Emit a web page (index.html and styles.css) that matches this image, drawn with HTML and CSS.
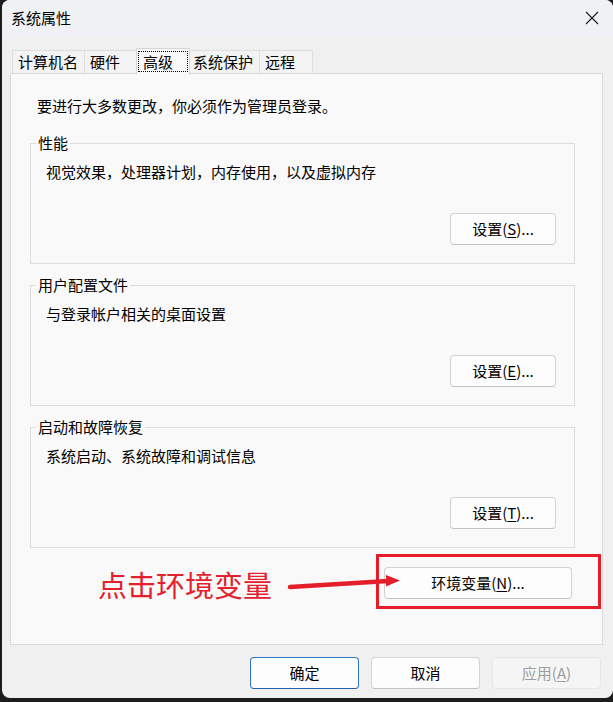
FILE: index.html
```html
<!DOCTYPE html>
<html lang="zh-CN">
<head>
<meta charset="utf-8">
<title>系统属性</title>
<link rel="stylesheet" href="styles.css">
</head>
<body>
<div class="window">
  <div class="titlebar">
    <span class="title">系统属性</span>
    <svg class="close" width="14" height="14" viewBox="0 0 14 14"><path d="M1 1L13 13M13 1L1 13" stroke="#1a1a1a" stroke-width="1.1" fill="none"/></svg>
  </div>
  <div class="tabstrip">
    <div class="tab">计算机名</div>
    <div class="tab">硬件</div>
    <div class="tab active"><span class="focus">高级</span></div>
    <div class="tab">系统保护</div>
    <div class="tab">远程</div>
  </div>
  <div class="pane">
    <p class="intro">要进行大多数更改，你必须作为管理员登录。</p>
    <fieldset class="group">
      <legend>性能</legend>
      <p class="desc">视觉效果，处理器计划，内存使用，以及虚拟内存</p>
      <div class="btnrow"><button class="btn">设置(<u>S</u>)...</button></div>
    </fieldset>
    <fieldset class="group">
      <legend>用户配置文件</legend>
      <p class="desc">与登录帐户相关的桌面设置</p>
      <div class="btnrow"><button class="btn">设置(<u>E</u>)...</button></div>
    </fieldset>
    <fieldset class="group">
      <legend>启动和故障恢复</legend>
      <p class="desc">系统启动、系统故障和调试信息</p>
      <div class="btnrow"><button class="btn">设置(<u>T</u>)...</button></div>
    </fieldset>
    <div class="annot-row">
      <span class="annot-text">点击环境变量</span>
      <svg class="arrow" width="128" height="55" viewBox="0 0 128 55">
        <path d="M18 33L116 27" stroke="#e41f2b" stroke-width="4.5" stroke-linecap="round" fill="none"/>
        <path d="M114 21L128 26.5L114 32.5Z" fill="#e41f2b"/>
      </svg>
      <div class="redbox"><button class="btn env">环境变量(<u>N</u>)...</button></div>
    </div>
  </div>
  <div class="footer">
    <button class="btn foot default">确定</button>
    <button class="btn foot">取消</button>
    <button class="btn foot disabled">应用(<u>A</u>)</button>
  </div>
</div>
</body>
</html>
```
FILE: styles.css
```css
html, body {
  margin: 0;
  padding: 0;
}
body {
  width: 613px;
  height: 702px;
  background: #1d1d1d;
  overflow: hidden;
}
.window {
  margin-left: 2px;
  width: 611px;
  height: 698px;
  background: #f0f0f0;
  border-radius: 8px;
  display: flex;
  flex-direction: column;
  font-family: "Noto Sans CJK SC", "Microsoft YaHei", sans-serif;
  font-size: 15px;
  color: #000;
  overflow: hidden;
}
.titlebar {
  height: 36px;
  flex: none;
  display: flex;
  align-items: center;
  justify-content: space-between;
  padding: 0 14px 0 9px;
  background: #eff1f5;
}
.title {
  line-height: 20px;
}
.tabstrip {
  flex: none;
  display: flex;
  align-items: flex-end;
  height: 25px;
  margin: 12px 0 0 10px;
  position: relative;
  z-index: 1;
}
.tab {
  box-sizing: border-box;
  height: 23px;
  min-width: 54px;
  padding: 0 6px 0 5px;
  line-height: 21px;
  border: 1px solid #dedede;
  border-bottom: none;
  background: #f3f3f3;
  margin-left: -1px;
  white-space: nowrap;
}
.tab:first-child {
  margin-left: 0;
}
.tab.active {
  height: 26px;
  padding: 1px 1px 0;
  margin: 0 -2px -1px -2px;
  background: #f9f9f9;
  border-color: #d6d6d6;
  position: relative;
  z-index: 2;
}
.focus {
  display: block;
  border: 1px dotted #000;
  padding: 0 4px;
  line-height: 19px;
  height: 21px;
  box-sizing: border-box;
  margin-top: 1px;
}
.pane {
  flex: none;
  box-sizing: border-box;
  height: 572px;
  margin: 0 10px 0 8px;
  border: 1px solid #d9d9d9;
  background: #f9f9f9;
  padding: 22px 27px 0 19px;
}
.intro {
  margin: 0 0 17px 7px;
  line-height: 20px;
}
.group {
  margin: 11px 0 0;
  padding: 0 18px 18px 5px;
  border: 1px solid #dcdcdc;
  min-width: 0;
}
.group:first-of-type {
  margin-top: 0;
}
.group legend {
  padding: 0 2px;
  line-height: 20px;
}
.desc {
  margin: 9px 0 0 10px;
  line-height: 20px;
}
.btnrow {
  display: flex;
  justify-content: flex-end;
  margin-top: 31px;
}
.btn {
  box-sizing: border-box;
  font-family: inherit;
  font-size: 15px;
  color: #000;
  background: #fdfdfd;
  border: 1px solid #d3d3d3;
  border-bottom-color: #c2c2c2;
  border-radius: 4px;
  height: 32px;
  width: 106px;
  padding: 0;
  line-height: 30px;
}
.btn u {
  text-underline-offset: 2px;
}
.annot-row {
  display: flex;
  align-items: stretch;
  margin: 6px -27px 0 68px;
}
.annot-text {
  flex: none;
  align-self: center;
  margin-top: 5px;
  color: #e3202c;
  font-size: 29px;
  line-height: 36px;
}
.arrow {
  flex: none;
  margin-right: -24px;
  position: relative;
  z-index: 3;
}
.redbox {
  flex: none;
  border: 3px solid #e61c2a;
  padding: 10px 26px 7px 5px;
}
.btn.env {
  width: 188px;
  display: block;
}
.footer {
  flex: none;
  display: flex;
  justify-content: flex-end;
  gap: 12px;
  margin-top: 12px;
  padding-right: 12px;
}
.btn.foot {
  width: 109px;
}
.btn.default {
  border: 1px solid #2e77c4;
  border-bottom-color: #1f5fa8;
}
.btn.disabled {
  background: #f5f5f5;
  border-color: #e6e6e6;
  color: #9d9d9d;
}
```
